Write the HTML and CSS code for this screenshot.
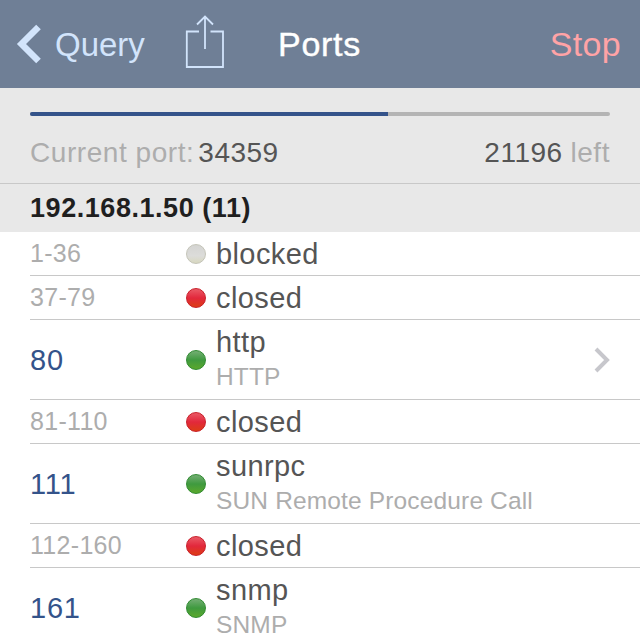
FILE: index.html
```html
<!DOCTYPE html>
<html lang="en">
<head>
    <meta charset="UTF-8">
    <title>Ports</title>
    <link rel="stylesheet" href="styles.css">
</head>
<body>

    <div class="navbar">
        <div class="nav-left">
            <svg class="back-icon" width="26" height="40" viewBox="0 0 26 40">
                <path d="M22.5 3 L5.5 20 L22.5 37" fill="none" stroke="#d2e4fb" stroke-width="6.5"/>
            </svg>
            <span class="back-label">Query</span>
            <svg class="share-icon" width="40" height="54" viewBox="0 0 40 54">
                <path d="M14 16.5 H1.8 V52 H38 V16.5 H25.5" fill="none" stroke="#d2e4fb" stroke-width="1.8"/>
                <path d="M20 1.5 V34 M12 9.5 L20 1.5 L28 9.5" fill="none" stroke="#d2e4fb" stroke-width="1.8"/>
            </svg>
        </div>
        <h1 class="nav-title">Ports</h1>
        <span class="nav-stop">Stop</span>
    </div>

    <div class="scan-panel">
        <div class="progress"><div class="progress-done" style="width: 61.7%"></div></div>
        <div class="scan-info">
            <div><span class="muted">Current port:</span><span class="scan-num scan-current">34359</span></div>
            <div><span class="scan-num">21196</span> <span class="muted">left</span></div>
        </div>
    </div>

    <div class="host-header">192.168.1.50 (11)</div>

    <div class="port-list">
        <div class="port-row">
            <span class="port-range">1-36</span>
            <span class="dot dot-gray"></span>
            <div class="port-name">blocked</div>
        </div>
        <div class="port-row">
            <span class="port-range">37-79</span>
            <span class="dot dot-red"></span>
            <div class="port-name">closed</div>
        </div>
        <div class="port-row port-open">
            <span class="port-num">80</span>
            <span class="dot dot-green"></span>
            <div class="port-name">http<small>HTTP</small></div>
            <svg class="chevron" width="18" height="26" viewBox="0 0 18 26">
                <path d="M3 2 L14 13 L3 24" fill="none" stroke="#c7c7cc" stroke-width="4"/>
            </svg>
        </div>
        <div class="port-row">
            <span class="port-range">81-110</span>
            <span class="dot dot-red"></span>
            <div class="port-name">closed</div>
        </div>
        <div class="port-row port-open">
            <span class="port-num">111</span>
            <span class="dot dot-green"></span>
            <div class="port-name">sunrpc<small>SUN Remote Procedure Call</small></div>
        </div>
        <div class="port-row">
            <span class="port-range">112-160</span>
            <span class="dot dot-red"></span>
            <div class="port-name">closed</div>
        </div>
        <div class="port-row port-open">
            <span class="port-num">161</span>
            <span class="dot dot-green"></span>
            <div class="port-name">snmp<small>SNMP</small></div>
        </div>
    </div>

</body>
</html>
```

FILE: styles.css
```css
html, body {
    margin: 0;
    height: 640px;
    overflow: hidden;
}

body {
    font-family: "Liberation Sans", Arial, sans-serif;
    background-color: #fff;
    color: #555;
}

.navbar {
    height: 88px;
    background-color: #6f7f96;
    display: grid;
    grid-template-columns: 1fr auto 1fr;
    align-items: center;
    padding: 0 19px 0 16px;
}

.nav-left {
    display: flex;
    align-items: center;
}

.back-icon {
    margin-right: 13px;
}

.back-label {
    font-size: 33px;
    margin-top: 1px;
    color: #d2e4fb;
    width: 131px;
}

.share-icon {
    margin-top: -4px;
    margin-left: -1px;
}

.nav-title {
    margin: 0 0 0 2px;
    font-size: 34px;
    letter-spacing: 0.7px;
    font-weight: normal;
    color: #fff;
    -webkit-text-stroke: 0.4px #fff;
}

.nav-stop {
    justify-self: end;
    font-size: 34px;
    letter-spacing: 0.3px;
    color: #ffa3a6;
}

.scan-panel {
    height: 96px;
    box-sizing: border-box;
    padding: 24px 30px 0;
    background-color: #e8e8e8;
    border-bottom: 1px solid #c8c8c8;
}

.progress {
    height: 4px;
    background-color: #b4b4b4;
    border-radius: 2px;
    overflow: hidden;
}

.progress-done {
    height: 100%;
    background-color: #34538a;
}

.scan-info {
    display: flex;
    justify-content: space-between;
    margin-top: 20px;
    font-size: 28px;
    line-height: 34px;
}

.muted {
    color: #adadad;
    letter-spacing: 0.55px;
}

.scan-num {
    color: #555;
    letter-spacing: 0.5px;
}

.scan-current {
    margin-left: 4px;
}

.host-header {
    height: 48px;
    line-height: 48px;
    padding-left: 30px;
    background-color: #e8e8e8;
    font-size: 27px;
    letter-spacing: 0.55px;
    font-weight: bold;
    color: #1f1f1f;
}

.port-list {
    padding-left: 30px;
}

.port-row {
    height: 44px;
    box-sizing: border-box;
    border-bottom: 1px solid #c8c8c8;
    display: flex;
    align-items: center;
}

.port-open {
    height: 80px;
}

.port-range {
    width: 156px;
    font-size: 25px;
    letter-spacing: 0.3px;
    color: #adadad;
}

.port-num {
    width: 156px;
    padding-top: 1px;
    font-size: 29px;
    letter-spacing: 0.8px;
    color: #34538a;
}

.dot {
    width: 20px;
    height: 20px;
    box-sizing: border-box;
    border-radius: 50%;
    margin-right: 10px;
}

.dot-gray {
    background: linear-gradient(#d4d4d2, #dcdcda 60%, #d8d8c0);
    border: 1px solid #c4c4b8;
}

.dot-red {
    background: linear-gradient(#ea5a66, #e2283c 50%, #dc3c14);
    border: 1px solid #c81e28;
}

.dot-green {
    background: linear-gradient(#74ae74, #3f9a3f 50%, #5aa82c);
    border: 1px solid #2f8a30;
}

.port-name {
    flex: 1;
    font-size: 29px;
    letter-spacing: 0.4px;
    line-height: 34px;
    color: #555;
}

.port-name small {
    display: block;
    margin-top: 1px;
    font-size: 24.5px;
    letter-spacing: 0.15px;
    line-height: 34px;
    color: #adadad;
}

.chevron {
    margin-right: 29px;
}
```
